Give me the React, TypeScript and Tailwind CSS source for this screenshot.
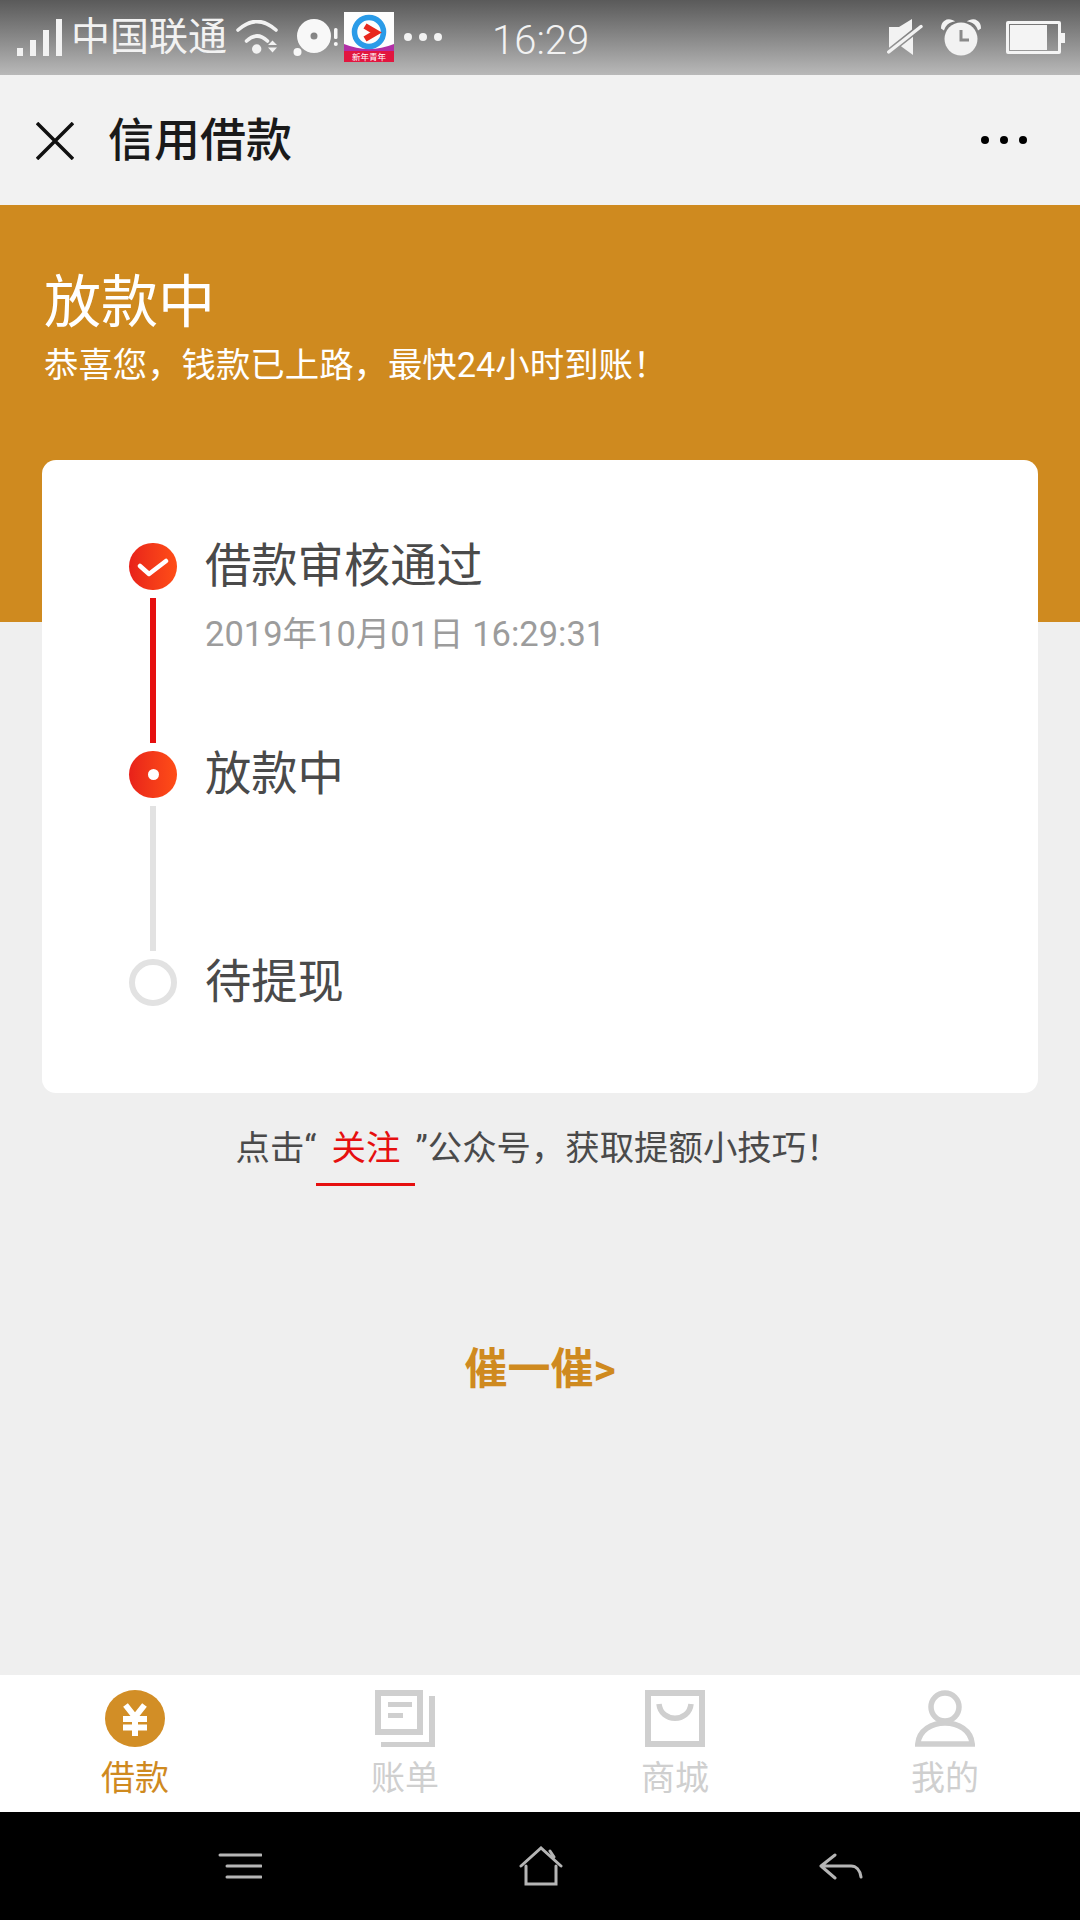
import React from 'react';
import clsx from 'clsx';

const CJK = "font-['Roboto','Noto_Sans_CJK_SC',sans-serif]";

const SignalIcon = () => (
    <svg width="46" height="37" viewBox="0 0 46 37" fill="#f2f2f2">
        <rect x="0" y="29" width="6" height="8" />
        <rect x="13" y="21" width="6" height="16" />
        <rect x="26" y="11" width="6" height="26" />
        <rect x="39" y="0" width="6" height="37" />
    </svg>
);

const WifiIcon = () => (
    <svg width="42" height="36" viewBox="0 0 42 36" fill="none" stroke="#f2f2f2" strokeWidth="3.6" strokeLinecap="round">
        <path d="M2 10 Q21 -7 40 10" />
        <path d="M10.500 21 Q21 11 31.500 21" />
        <circle cx="20.700" cy="29" r="4.700" fill="#f2f2f2" stroke="none" />
        <path d="M32 25 L36.500 20.500 L41 25 Z M32 27.500 L41 27.500 L36.500 32.500 Z" fill="#f2f2f2" stroke="none" />
    </svg>
);

const DiscIcon = () => (
    <svg width="46" height="38" viewBox="0 0 46 38" fill="#f8f8f8">
        <path fillRule="evenodd" d="M21 0 A17 17 0 1 1 21 34 A17 17 0 1 1 21 0 Z M21 13.5 A3.5 3.5 0 1 0 21 20.5 A3.5 3.5 0 1 0 21 13.5 Z" />
        <circle cx="4.5" cy="33" r="4" />
        <rect x="41" y="9" width="3.5" height="11" rx="1.5" />
        <circle cx="42.8" cy="25" r="2" />
    </svg>
);

const AppBadge = () => (
    <svg width="50" height="50" viewBox="0 0 50 50">
        <rect width="50" height="50" fill="#fdfdfd" />
        <path d="M0 32 Q25 42 50 32 V41 H0 Z" fill="#b22ea6" />
        <rect y="39" width="50" height="11" fill="#e2163f" />
        <circle cx="25" cy="20" r="14.500" fill="none" stroke="#2a9be8" strokeWidth="5.500" />
        <path d="M21 14 L32 20.500 L21 27" fill="none" stroke="#e8281e" strokeWidth="6" />
        <text x="25" y="48" textAnchor="middle" fontSize="8.500" fill="#fff" fontFamily="Noto Sans CJK SC">新年青年</text>
    </svg>
);

const MuteIcon = () => (
    <svg width="36" height="38" viewBox="0 0 36 38" fill="#f2f2f2">
        <path d="M2 8 H12 L25 0 V10.600 L2 28.800 Z" />
        <path d="M26 17.800 V36 L14 27.300 Z" />
        <path d="M1.700 33 L34 7.500" stroke="#f2f2f2" strokeWidth="3.400" strokeLinecap="round" />
    </svg>
);

const AlarmIcon = () => (
    <svg width="40" height="37" viewBox="0 0 40 37">
        <circle cx="20" cy="20" r="16.500" fill="#f2f2f2" />
        <path d="M1 9 C1 3 6 0 11 2 C7 3 4 6 2.500 10 Z M39 9 C39 3 34 0 29 2 C33 3 36 6 37.500 10 Z" fill="#f2f2f2" stroke="#f2f2f2" strokeWidth="2" />
        <path d="M20 11 V21 H28" fill="none" stroke="#8a8a8a" strokeWidth="3" />
    </svg>
);

const BatteryIcon = () => (
    <div className="flex items-center">
        <div className="w-[55px] h-[33px] rounded-[2px] border-[3px] border-[#f4f4f4] p-[1px] flex">
            <div className="w-[37px] h-full bg-[#f4f4f4]" />
        </div>
        <div className="w-[4px] h-[10px] bg-[#f4f4f4]" />
    </div>
);

const YenIcon = () => (
    <svg width="60" height="57" viewBox="0 0 60 57">
        <ellipse cx="30" cy="28.500" rx="30" ry="28.500" fill="#d28e26" />
        <path d="M20.500 15 L30 27 L39.500 15 M30 27 V46 M18 29 H42 M18 37.500 H42" fill="none" stroke="#fff" strokeWidth="6" />
    </svg>
);

const BillIcon = () => (
    <svg width="60" height="57" viewBox="0 0 60 57" fill="#cfcfcf">
        <path fillRule="evenodd" d="M0 0 H48 V45 H0 Z M6 6 V39 H42 V6 Z" />
        <path d="M54 6 H60 V57 H6 V52 H54 Z" />
        <rect x="13" y="12" width="24" height="5" />
        <rect x="13" y="23" width="15" height="5" />
    </svg>
);

const BagIcon = () => (
    <svg width="60" height="57" viewBox="0 0 60 57" fill="none" stroke="#cfcfcf">
        <rect x="3" y="3" width="54" height="51" strokeWidth="6" />
        <path d="M14 14 C16 33 44 33 46 14" strokeWidth="5.500" />
    </svg>
);

const PersonIcon = () => (
    <svg width="60" height="57" viewBox="0 0 60 57" fill="none" stroke="#cfcfcf" strokeWidth="5.500">
        <circle cx="30" cy="17" r="14" />
        <path d="M2.800 54 C5 26 55 26 57.200 54 Z" />
    </svg>
);

const tabs = [
    { label: '借款', icon: <YenIcon />, active: true },
    { label: '账单', icon: <BillIcon />, active: false },
    { label: '商城', icon: <BagIcon />, active: false },
    { label: '我的', icon: <PersonIcon />, active: false },
];

const StepDot = ({ state }: { state: 'done' | 'current' | 'todo' }) => {
    if (state === 'todo') {
        return <div className="w-[48px] h-[47px] rounded-full border-[6px] border-[#e2e2e2] bg-white" />;
    }
    return (
        <div className="w-[48px] h-[47px] rounded-full bg-gradient-to-r from-[#e8211a] to-[#ff4d17] flex items-center justify-center">
            {state === 'done' ? (
                <svg width="32" height="22" viewBox="0 0 32 22" fill="none" stroke="#fff" strokeWidth="4.500" strokeLinecap="round" strokeLinejoin="round" className="mt-[3px]">
                    <path d="M3 9 L12 17 L29 4" />
                </svg>
            ) : (
                <div className="w-[11px] h-[11px] rounded-full bg-white" />
            )}
        </div>
    );
};

const Step = ({ state, title, time, line }: { state: 'done' | 'current' | 'todo'; title: string; time?: string; line?: string }) => (
    <div className="flex gap-[28px]">
        <div className="flex flex-col items-center w-[48px]">
            <StepDot state={state} />
            {line && <div className={clsx('w-[6px] h-[145px] mt-[8px] mb-[8px]', line)} />}
        </div>
        <div>
            <div className="text-[46.3px] leading-[47px] text-[#4a4a4a]">{title}</div>
            {time && <div className="text-[34.5px] leading-[40px] mt-[24px] text-[#9c9c9c]">{time}</div>}
        </div>
    </div>
);

export default function App() {
    return (
        <div className={clsx('w-[1080px] h-[1920px] flex flex-col bg-[#efefef] overflow-hidden', CJK)}>
            {/* Status bar */}
            <div className="h-[75px] shrink-0 bg-gradient-to-b from-[#5a5a5a] to-[#b9b9b9] flex items-center text-[#f2f2f2] relative">
                <div className="ml-[17px] mt-[-1px]"><SignalIcon /></div>
                <span className="ml-[8px] text-[39px] leading-none">中国联通</span>
                <div className="ml-[9px]"><WifiIcon /></div>
                <div className="ml-[15px]"><DiscIcon /></div>
                <div className="ml-[5px] mt-[-1px]"><AppBadge /></div>
                <div className="ml-[10px] flex gap-[7px] mt-[-1px]">
                    <div className="w-[8px] h-[8px] rounded-full bg-[#f2f2f2]" />
                    <div className="w-[8px] h-[8px] rounded-full bg-[#f2f2f2]" />
                    <div className="w-[8px] h-[8px] rounded-full bg-[#f2f2f2]" />
                </div>
                <span className="ml-[50px] mt-[6px] text-[40px] leading-none font-light font-['Roboto']">16:29</span>
                <div className="ml-auto flex items-center">
                    <MuteIcon />
                    <div className="ml-[18px]"><AlarmIcon /></div>
                    <div className="ml-[25px] mr-[15px]"><BatteryIcon /></div>
                </div>
            </div>

            {/* Nav bar */}
            <div className="h-[130px] shrink-0 bg-[#f2f2f2] flex items-center pl-[36px] pr-[53px]">
                <svg width="38" height="38" viewBox="0 0 38 38" stroke="#111" strokeWidth="3.500" className="mt-[1px]">
                    <path d="M1 1 L37 37 M37 1 L1 37" />
                </svg>
                <span className="ml-[34px] text-[46px] leading-none font-medium text-[#1a1a1a]">信用借款</span>
                <div className="ml-auto flex gap-[11px]">
                    <div className="w-[8px] h-[8px] rounded-full bg-black" />
                    <div className="w-[8px] h-[8px] rounded-full bg-black" />
                    <div className="w-[8px] h-[8px] rounded-full bg-black" />
                </div>
            </div>

            {/* Orange header */}
            <div className="h-[417px] shrink-0 bg-[#cf8a1f] pl-[44px] pt-[67px] text-white">
                <div className="text-[57px] leading-[62px]">放款中</div>
                <div className="text-[34.4px] leading-[40px] mt-[11px]">恭喜您，钱款已上路，最快24小时到账！</div>
            </div>

            {/* Progress card */}
            <div className="mx-[42px] -mt-[162px] h-[633px] shrink-0 bg-white rounded-[14px] pt-[83px] pl-[87px] relative">
                <Step state="done" title="借款审核通过" time="2019年10月01日 16:29:31" line="bg-[#e60f0f]" />
                <Step state="current" title="放款中" line="bg-[#e2e2e2]" />
                <Step state="todo" title="待提现" />
            </div>

            {/* Follow tip */}
            <div className="mt-[33px] flex justify-center text-[34.4px] leading-[44px] text-[#4a4a4a] pr-[4px]">
                <span>点击“</span>
                <span className="text-[#e60f0f] border-b-[3px] border-[#e60f0f] w-[99px] h-[60px] text-center">关注</span>
                <span>”公众号，获取提额小技巧！</span>
            </div>

            <div className="mt-[158px] text-center text-[43px] leading-[50px] font-bold text-[#cf8a1f]">催一催&gt;</div>

            {/* Tab bar */}
            <div className="mt-auto h-[137px] shrink-0 bg-white grid grid-cols-4 pt-[15px]">
                {tabs.map((tab) => (
                    <div key={tab.label} className="flex flex-col items-center">
                        {tab.icon}
                        <span className={clsx('text-[34px] leading-[40px] mt-[11px]', tab.active ? 'text-[#cf8a1f]' : 'text-[#cfcfcf]')}>
                            {tab.label}
                        </span>
                    </div>
                ))}
            </div>

            {/* Android keys */}
            <div className="h-[108px] shrink-0 bg-black flex items-center">
                <svg width="44" height="26" viewBox="0 0 44 26" stroke="#b5b5b5" strokeWidth="3" strokeLinecap="round" className="ml-[218px]">
                    <path d="M2 2 H43 M9 13 H43 M9 24 H43" />
                </svg>
                <svg width="44" height="40" viewBox="0 0 44 40" fill="none" stroke="#b5b5b5" strokeWidth="3" strokeLinecap="round" className="ml-[257px]">
                    <path d="M2 20 L22 2 L42 20 M7 20 V38 H37 V20 M31 5 L35 11" />
                </svg>
                <svg width="44" height="27" viewBox="0 0 44 27" fill="none" stroke="#b5b5b5" strokeWidth="3" strokeLinecap="round" strokeLinejoin="round" className="ml-[256px]">
                    <path d="M16 2 L2 13 L16 25 M2 13 H32 C37 13 41 17 42 24" />
                </svg>
            </div>
        </div>
    );
}
